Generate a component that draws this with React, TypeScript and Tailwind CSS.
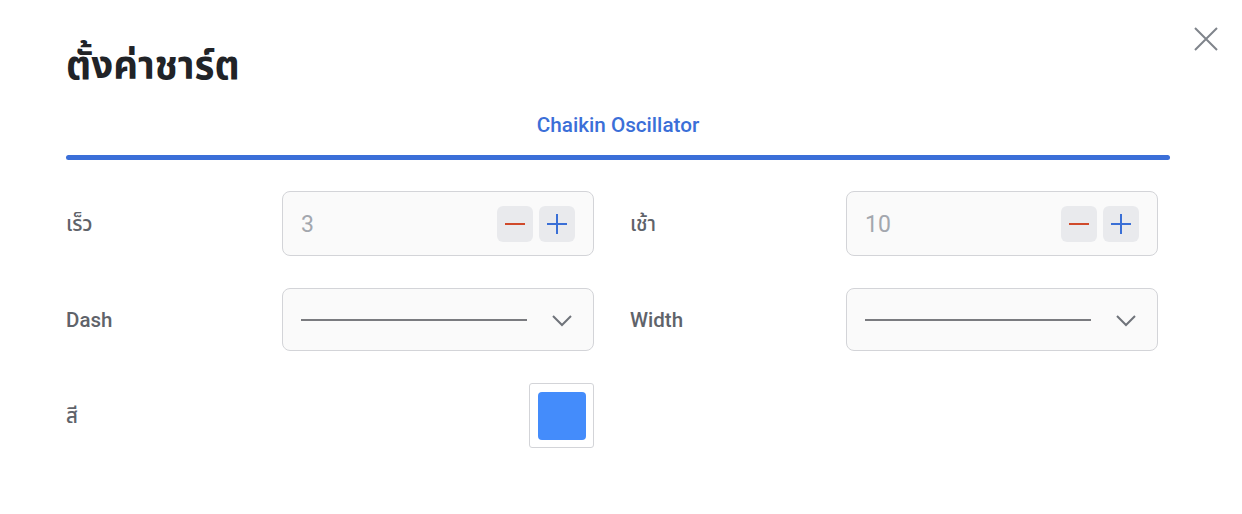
import React from 'react';

const font = { fontFamily: 'Roboto, "Noto Sans", "Noto Sans Thai", sans-serif' };

function Stepper({ value }: { value: string }) {
  return (
    <div className="flex h-[65px] w-[312px] items-center justify-between rounded-lg border border-[#d3d4d8] bg-[#fafafa] pl-[18px] pr-[18px]">
      <span className="pt-[3px] text-[23px] text-[#a3a7ae]">{value}</span>
      <div className="flex gap-[6px]">
        <button className="flex h-[36px] w-[36px] items-center justify-center rounded-md bg-[#e9eaed]">
          <svg width="22" height="22" viewBox="0 0 22 22">
            <path d="M1 11h20" stroke="#d04a2b" strokeWidth="2" />
          </svg>
        </button>
        <button className="flex h-[36px] w-[36px] items-center justify-center rounded-md bg-[#e9eaed]">
          <svg width="22" height="22" viewBox="0 0 22 22">
            <path d="M1 11h20M11 1v20" stroke="#3a6fd6" strokeWidth="2" />
          </svg>
        </button>
      </div>
    </div>
  );
}

function LineSelect() {
  return (
    <div className="flex h-[63px] w-[312px] items-center rounded-lg border border-[#d3d4d8] bg-[#fafafa] pl-[18px] pr-[20px]">
      <div className="h-[2px] w-[226px] bg-[#7a7b7f]" />
      <svg className="ml-auto" width="22" height="14" viewBox="0 0 22 14">
        <path d="M2 3l9 9 9-9" fill="none" stroke="#6f737a" strokeWidth="2" />
      </svg>
    </div>
  );
}

function Field({ label, children }: { label: string; children: React.ReactNode }) {
  return (
    <div className="flex w-[528px] items-center justify-between">
      <span className="pt-[1px] text-[20.5px] font-medium text-[#5f636a]">{label}</span>
      {children}
    </div>
  );
}

export default function App() {
  return (
    <div className="relative h-[514px] w-[1242px] bg-white" style={font}>
      <button className="absolute right-[23px] top-[26px]">
        <svg width="26" height="26" viewBox="0 0 26 26">
          <path d="M2 2l22 22M24 2L2 24" stroke="#7f848b" strokeWidth="2" />
        </svg>
      </button>
      <div className="pl-[66px] pr-[72px] pt-[38px]">
        <h1 className="text-[38.5px] font-bold leading-[56px] text-[#212327]">ตั้งค่าชาร์ต</h1>
        <div className="mt-[14px] flex flex-col items-center">
          <span className="pt-[1px] text-[20.7px] font-medium leading-[32px] text-[#3b6fd8]">Chaikin Oscillator</span>
          <div className="mt-[14px] h-[5px] w-full rounded-full bg-[#3b6fd8]" />
        </div>
        <div className="mt-[31px] flex flex-col gap-[32px]">
          <div className="flex gap-[36px]">
            <Field label="เร็ว">
              <Stepper value="3" />
            </Field>
            <Field label="เช้า">
              <Stepper value="10" />
            </Field>
          </div>
          <div className="flex gap-[36px]">
            <Field label="Dash">
              <LineSelect />
            </Field>
            <Field label="Width">
              <LineSelect />
            </Field>
          </div>
          <div className="flex gap-[36px]">
            <Field label="สี">
              <div className="flex h-[65px] w-[65px] items-center justify-center rounded-[3px] border border-[#d3d4d8]">
                <div className="h-[48px] w-[48px] rounded-[4px] bg-[#448cfb]" />
              </div>
            </Field>
          </div>
        </div>
      </div>
    </div>
  );
}
